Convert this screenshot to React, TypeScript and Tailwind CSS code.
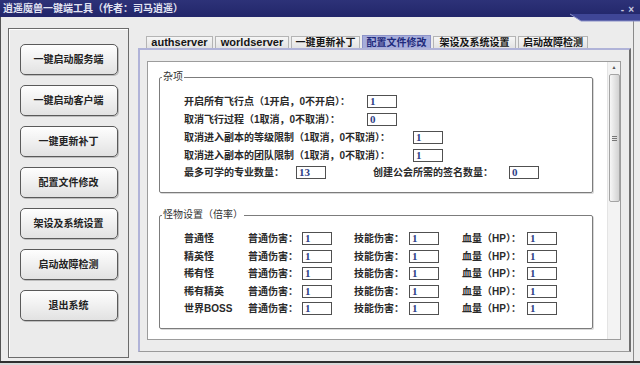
import React from "react";

const Input = ({ v }: { v: string }) => (
  <div className="w-[30px] h-[13px] shrink-0 border border-[#505050] bg-white flex items-end pl-[2px] text-[11px] leading-[12px] text-[#2e3f86] [font-family:'Liberation_Serif',serif]">
    {v}
  </div>
);

const Btn = ({ t }: { t: string }) => (
  <div className="w-[98px] h-[31px] shrink-0 rounded-[5px] border border-[#5a5a5a] bg-gradient-to-b from-[#fefefe] to-[#e2e2e2] shadow-[1px_1px_0_#bdbdbd] flex items-center justify-center text-[10px] font-bold text-[#222]">
    {t}
  </div>
);

const Group = ({ title, h, pt, children }: { title: string; h: string; pt: string; children: React.ReactNode }) => (
  <div className={`relative ml-[11px] w-[434px] ${h} border border-[#7c7c7c] rounded-[2px] shadow-[inset_1px_1px_0_#ffffff,1px_1px_0_#d8d8d8] ${pt}`}>
    <div className="absolute -top-[8px] left-[2px] bg-white px-[1px] text-[10px] leading-[14px] text-[#333]">{title}</div>
    {children}
  </div>
);

const tabs = [
  { t: "authserver", w: "w-[67px]", latin: true },
  { t: "worldserver", w: "w-[74px]", latin: true },
  { t: "一键更新补丁", w: "w-[69px]" },
  { t: "配置文件修改", w: "w-[69px]", active: true },
  { t: "架设及系统设置", w: "w-[83px]" },
  { t: "启动故障检测", w: "w-[70px]" },
];

const monsters = ["普通怪", "精英怪", "稀有怪", "稀有精英", "世界BOSS"];

export default function App() {
  return (
    <div className="relative w-[640px] h-[365px] overflow-hidden bg-[#ececec] flex flex-col [font-family:'Liberation_Sans','Noto_Sans_CJK_SC',sans-serif]">
      {/* title bar */}
      <div className="relative h-[17px] shrink-0 bg-gradient-to-b from-[#2d3278] to-[#22266a] flex items-center pl-[3px] text-[10px] font-bold text-[#e2e4f2]">
        逍遥魔兽一键端工具（作者：司马逍遥）
        <div className="absolute right-[16px] top-[2px] text-[10px] text-[#c9cbe0]">-</div>
        <div className="absolute right-[6px] top-[2px] text-[10px] text-[#c9cbe0]">×</div>
      </div>
      <svg className="absolute left-0 top-0" width="640" height="24" viewBox="0 0 640 24">
        <polygon points="570,14 640,14 640,21 581,21" fill="#3f4696" />
        <polyline points="570,14 581,21 640,21" fill="none" stroke="#8a90c8" strokeWidth="1" />
      </svg>

      {/* body */}
      <div className="flex-1 w-[634px] flex pl-[7px] pt-[11px] border-l border-[#555] border-r border-r-[#8a8a8a]">
        {/* left panel */}
        <div className="w-[121px] h-[330px] shrink-0 border border-[#6b6b6b] bg-[#ebebeb] shadow-[inset_1px_1px_0_#ffffff] flex flex-col items-center pt-[15px] gap-[10px]">
          <Btn t="一键启动服务端" />
          <Btn t="一键启动客户端" />
          <Btn t="一键更新补丁" />
          <Btn t="配置文件修改" />
          <Btn t="架设及系统设置" />
          <Btn t="启动故障检测" />
          <Btn t="退出系统" />
        </div>

        {/* right */}
        <div className="ml-[9px] w-[493px] flex flex-col pt-[8px]">
          <div className="h-[12px] flex items-end pl-[8px] gap-[2px]">
            {tabs.map((tb) => (
              <div
                key={tb.t}
                className={`${tb.w} shrink-0 flex items-center justify-center ${tb.latin ? "text-[11px]" : "text-[10px]"} font-bold border border-b-0 ${
                  tb.active
                    ? "h-[13px] bg-[#a6addb] border-[#8d93c8] text-[#1f2a7c]"
                    : "h-[12px] bg-gradient-to-b from-[#f6f6f6] to-[#e3e3e3] border-[#b4b4b4] text-[#151515]"
                }`}
              >
                {tb.t}
              </div>
            ))}
          </div>
          <div className="h-[304px] border-l-2 border-t-2 border-[#b0b3d8] border-r-2 border-r-[#6f6f6f] border-b border-b-[#9a9a9a] bg-[#ececec] pl-[7px] pt-[11px]">
            <div className="w-[474px] h-[279px] border border-[#9c9c9c] bg-white flex">
              <div className="flex-1 pt-[15px] flex flex-col gap-[22px]">
                <Group title="杂项" h="h-[116px]" pt="pt-[15px]">
                  <div className="pl-[24px] flex flex-col text-[10px] font-bold text-[#2a2a2a]">
                    <div className="h-[17.75px] flex items-center">
                      <div className="w-[183px]">开启所有飞行点（1开启，0不开启）：</div>
                      <Input v="1" />
                    </div>
                    <div className="h-[17.75px] flex items-center">
                      <div className="w-[183px]">取消飞行过程（1取消，0不取消）：</div>
                      <Input v="0" />
                    </div>
                    <div className="h-[17.75px] flex items-center">
                      <div className="w-[229px]">取消进入副本的等级限制（1取消，0不取消）：</div>
                      <Input v="1" />
                    </div>
                    <div className="h-[17.75px] flex items-center">
                      <div className="w-[229px]">取消进入副本的团队限制（1取消，0不取消）：</div>
                      <Input v="1" />
                    </div>
                    <div className="h-[17.75px] flex items-center">
                      <div className="w-[112px]">最多可学的专业数量：</div>
                      <Input v="13" />
                      <div className="ml-[47px] w-[136px]">创建公会所需的签名数量：</div>
                      <Input v="0" />
                    </div>
                  </div>
                </Group>
                <Group title="怪物设置（倍率）" h="h-[114px]" pt="pt-[14px]">
                  <div className="pl-[24px] flex flex-col text-[10px] font-bold text-[#2a2a2a]">
                    {monsters.map((m) => (
                      <div key={m} className="h-[17.5px] flex items-center">
                        <div className="w-[64px]">{m}</div>
                        <div className="w-[54px]">普通伤害：</div>
                        <Input v="1" />
                        <div className="ml-[22px] w-[55px]">技能伤害：</div>
                        <Input v="1" />
                        <div className="ml-[23px] w-[65px]">血量（HP）：</div>
                        <Input v="1" />
                      </div>
                    ))}
                  </div>
                </Group>
              </div>
              {/* scrollbar */}
              <div className="w-[13px] shrink-0 bg-[#f3f3f3] border-l border-[#e4e4e4] flex flex-col items-center">
                <div className="h-[12px] flex items-center justify-center text-[5px] text-[#555]">▲</div>
                <div className="w-[11px] h-[128px] rounded-[2px] border border-[#a4a4a4] bg-gradient-to-r from-[#f7f7f7] via-[#e4e4e4] to-[#d2d2d2] flex flex-col items-center justify-center gap-[1px]">
                  <div className="w-[5px] h-px bg-[#777]" />
                  <div className="w-[5px] h-px bg-[#777]" />
                  <div className="w-[5px] h-px bg-[#777]" />
                </div>
              </div>
            </div>
          </div>
        </div>
      </div>
      <div className="h-[2px] shrink-0 bg-[#2f2f2f]" />
      <div className="h-[2px] shrink-0 bg-[#d8d8d8]" />
    </div>
  );
}
